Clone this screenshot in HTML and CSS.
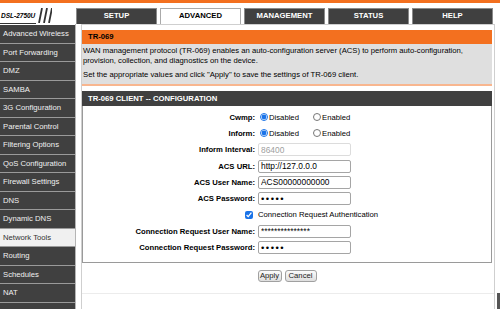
FILE: index.html
```html
<!DOCTYPE html>
<html lang="en">

<head>
    <meta charset="UTF-8" />
    <title>TR-069</title>
    <link rel="stylesheet" href="styles.css">
</head>

<body>
    <div class="topbar"></div>

    <div class="header">
        <div class="logo">
            <span class="model">DSL-2750U</span>
            <svg class="slashes" width="16" height="15" viewBox="0 0 16 15">
                <path d="M3 15 L6 0 M8 15 L11 0 M13 15 L16 0" stroke="#333" stroke-width="1.8" fill="none" />
            </svg>
        </div>
        <ul class="tabs">
            <li>SETUP</li>
            <li class="active">ADVANCED</li>
            <li>MANAGEMENT</li>
            <li>STATUS</li>
            <li>HELP</li>
        </ul>
    </div>

    <div class="main">
        <ul class="sidebar">
            <li>Advanced Wireless</li>
            <li>Port Forwarding</li>
            <li>DMZ</li>
            <li>SAMBA</li>
            <li>3G Configuration</li>
            <li>Parental Control</li>
            <li>Filtering Options</li>
            <li>QoS Configuration</li>
            <li>Firewall Settings</li>
            <li>DNS</li>
            <li>Dynamic DNS</li>
            <li class="active">Network Tools</li>
            <li>Routing</li>
            <li>Schedules</li>
            <li>NAT</li>
            <li>FTPD Setting</li>
        </ul>

        <div class="content">
            <div class="section-title">TR-069</div>
            <div class="intro">
                <p>WAN management protocol (TR-069) enables an auto-configuration server (ACS) to perform auto-configuration, provision, collection, and diagnostics on the device.</p>
                <p class="second">Set the appropriate values and click "Apply" to save the settings of TR-069 client.</p>
            </div>

            <div class="box">
                <div class="box-title">TR-069 CLIENT -- CONFIGURATION</div>
                <div class="form">
                    <div class="label">Cwmp:</div>
                    <div class="value">
                        <label class="choice"><input type="radio" name="cwmp" checked>Disabled</label>
                        <label class="choice"><input type="radio" name="cwmp">Enabled</label>
                    </div>

                    <div class="label">Inform:</div>
                    <div class="value">
                        <label class="choice"><input type="radio" name="inform" checked>Disabled</label>
                        <label class="choice"><input type="radio" name="inform">Enabled</label>
                    </div>

                    <div class="label">Inform Interval:</div>
                    <div class="value"><input class="field" type="text" value="86400" disabled></div>

                    <div class="label">ACS URL:</div>
                    <div class="value"><input class="field" type="text" value="http://127.0.0.0"></div>

                    <div class="label">ACS User Name:</div>
                    <div class="value"><input class="field" type="text" value="ACS00000000000"></div>

                    <div class="label">ACS Password:</div>
                    <div class="value"><input class="field secret" type="password" value="admin"></div>

                    <div class="label"><input class="check" type="checkbox" checked></div>
                    <div class="value">Connection Request Authentication</div>

                    <div class="label">Connection Request User Name:</div>
                    <div class="value"><input class="field" type="text" value="***************"></div>

                    <div class="label">Connection Request Password:</div>
                    <div class="value"><input class="field secret" type="password" value="admin"></div>
                </div>
            </div>

            <div class="actions">
                <button class="btn-apply">Apply</button>
                <button class="btn-cancel">Cancel</button>
            </div>

            <div class="footer"></div>
        </div>

        <div class="rail"><div class="thumb"></div></div>
    </div>
</body>

</html>
```

FILE: styles.css
```css
body {
    margin: 0;
    font-family: "Liberation Sans", Arial, sans-serif;
    font-size: 7.7px;
    color: #000;
    background: #fff;
    overflow: hidden;
}

.topbar {
    height: 3px;
    background: #f3701f;
}

/* Cabeçalho */
.header {
    display: flex;
    height: 21px;
}

.logo {
    display: flex;
    align-items: flex-end;
    width: 76px;
}

.model {
    display: block;
    height: 15px;
    line-height: 15px;
    padding: 0 1px;
    font-size: 6.5px;
    font-weight: bold;
    font-style: italic;
    background: #fff;
    border-bottom: 1px solid #333;
}

.slashes {
    display: block;
    margin-bottom: 1px;
}

.tabs {
    display: flex;
    align-items: flex-end;
    gap: 3px;
    margin: 0;
    padding: 0;
    list-style: none;
}

.tabs li {
    box-sizing: border-box;
    width: 81px;
    height: 16px;
    line-height: 14px;
    text-align: center;
    font-weight: bold;
    color: #fff;
    background: #404040;
    border: 1px solid #8a8a8a;
    border-bottom: none;
}

.tabs li.active {
    color: #000;
    background: #fff;
    border-color: #aaa;
}

/* Corpo */
.main {
    display: flex;
    align-items: flex-start;
}

.sidebar {
    width: 75px;
    margin: 0;
    padding: 1px 0 0;
    list-style: none;
    border-right: 1px solid #b5b5b5;
}

.sidebar li {
    height: 17.5px;
    line-height: 17.5px;
    padding-left: 3px;
    color: #f0f0f0;
    background: #404040;
    border-bottom: 1px solid #9a9a9a;
    white-space: nowrap;
    overflow: hidden;
}

.sidebar li.active {
    color: #333;
    background: #f0f0f0;
}

.content {
    width: 412px;
    margin-left: 5px;
    padding-top: 5px;
    border: 1px solid #cfcfcf;
    border-bottom: none;
    min-height: 290px;
}

.section-title {
    height: 14px;
    line-height: 14px;
    padding-left: 6px;
    margin-right: 2px;
    font-weight: bold;
    background: #f3701f;
}

.intro {
    margin-right: 2px;
    padding: 2px 3px 5px 1px;
    background: #dfdfdf;
    border-bottom: 2px solid #f8b68f;
    line-height: 9.5px;
}

.intro p {
    margin: 0;
}

.intro .second {
    margin-top: 4.5px;
}

.box {
    margin: 5px 2px 0 0;
}

.box-title {
    height: 15px;
    line-height: 15px;
    padding-left: 6px;
    font-weight: bold;
    color: #fff;
    background: #404040;
}

/* Formulário */
.form {
    display: grid;
    grid-template-columns: 172px 1fr;
    grid-auto-rows: 16.3px;
    column-gap: 3px;
    align-items: center;
    padding: 3px 0 6px;
    border: 1px solid #9a9a9a;
    border-top: none;
}

.label {
    text-align: right;
    font-weight: bold;
    white-space: nowrap;
}

.value {
    display: flex;
    align-items: center;
    white-space: nowrap;
}

.choice {
    display: flex;
    align-items: center;
    width: 53px;
}

.choice input {
    width: 8px;
    height: 8px;
    margin: 0 1px 0 2px;
    accent-color: #1a73e8;
}

.field {
    box-sizing: border-box;
    width: 93px;
    height: 13px;
    padding: 0 2px;
    font-family: "Liberation Sans", Arial, sans-serif;
    font-size: 8.4px;
    color: #000;
    background: #fff;
    border: 1px solid #a5a5a5;
    border-radius: 2px;
}

.field.secret {
    font-size: 9.5px;
    letter-spacing: 1.5px;
}

.field:disabled {
    color: #a0a0a0;
    border-color: #dcdcdc;
}

.check {
    width: 8px;
    height: 8px;
    margin: 0 2px 0 0;
    vertical-align: middle;
    accent-color: #1a73e8;
}

.actions {
    display: flex;
    justify-content: center;
    gap: 3px;
    padding-top: 7px;
    margin-right: 2px;
}

.actions button {
    box-sizing: border-box;
    height: 12px;
    padding: 0;
    font-family: "Liberation Sans", Arial, sans-serif;
    font-size: 7.7px;
    color: #222;
    background: linear-gradient(#fbfbfb, #dedede);
    border: 1px solid #a0a0a0;
    border-radius: 3px;
}

.btn-apply {
    width: 24px;
}

.btn-cancel {
    width: 32px;
}

.footer {
    margin-top: 11px;
    border-top: 1px solid #ececec;
}

.rail {
    width: 3px;
    margin-left: 2px;
}

.thumb {
    height: 20px;
    margin-top: 269px;
    background: #555;
}
```
